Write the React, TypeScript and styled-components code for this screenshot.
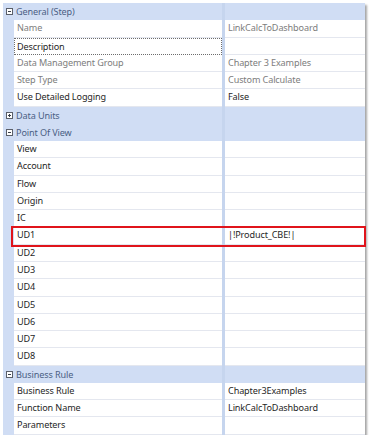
import React from "react";
import styled, { createGlobalStyle } from "styled-components";

const Global = createGlobalStyle`
  html, body { margin: 0; padding: 0; background: #ffffff; }
  body { font-family: "Noto Sans", "Open Sans", sans-serif; }
`;

const ROW_H = 17.28;

const Panel = styled.div`
  position: relative;
  margin: 3px 0 0 3px;
  width: 362px;
  background: #ffffff;
  box-shadow: 2px 2px 2px rgba(0, 0, 0, 0.35);
`;

const Row = styled.div<{ $header?: boolean }>`
  display: grid;
  grid-template-columns: 11px 208px 3px 140px;
  height: ${ROW_H}px;
  background: ${(p) => (p.$header ? "#d0ddf4" : "#ffffff")};
  font-size: 9.1px;
  letter-spacing: -0.12px;
  line-height: ${ROW_H}px;
`;

const Gutter = styled.div`
  background: #d0ddf4;
  display: flex;
  align-items: center;
  justify-content: center;
`;

const Toggle = styled.span<{ $open: boolean }>`
  position: relative;
  display: block;
  box-sizing: border-box;
  width: 7px;
  height: 7px;
  border: 1px solid #5a5f6a;
  background: #ffffff;
  margin-left: 2px;
  &::before {
    content: "";
    position: absolute;
    left: 1px;
    top: 2px;
    width: 3px;
    height: 1px;
    background: #3a3f4a;
  }
  &::after {
    content: "";
    position: absolute;
    left: 2px;
    top: 1px;
    width: 1px;
    height: 3px;
    background: #3a3f4a;
    display: ${(p) => (p.$open ? "none" : "block")};
  }
`;

const HeaderLabel = styled.div`
  color: #4b5f84;
  padding-left: 2px;
  white-space: nowrap;
`;

const Label = styled.div<{ $muted?: boolean; $focused?: boolean }>`
  box-sizing: border-box;
  color: ${(p) => (p.$muted ? "#7d7d7d" : "#1f1f1f")};
  white-space: nowrap;
  border: ${(p) => (p.$focused ? "1px dotted #6d6d6d" : "none")};
  border-bottom: ${(p) => (p.$focused ? "1px dotted #6d6d6d" : "1px solid #e4e7ef")};
  padding-left: ${(p) => (p.$focused ? "2px" : "3px")};
  line-height: ${(p) => (p.$focused ? ROW_H - 2 : ROW_H - 1)}px;
`;

const Divider = styled.div`
  background: #c6d5ee;
`;

const Value = styled.div<{ $muted?: boolean }>`
  box-sizing: border-box;
  color: ${(p) => (p.$muted ? "#7d7d7d" : "#1f1f1f")};
  padding-left: 3px;
  white-space: nowrap;
  overflow: hidden;
  border-bottom: 1px solid #e4e7ef;
  line-height: ${ROW_H - 1}px;
`;

const HeaderFill = styled.div``;

const Highlight = styled.div<{ $index: number }>`
  position: absolute;
  left: 8px;
  right: -1px;
  top: ${(p) => p.$index * ROW_H - 1.5}px;
  height: ${ROW_H + 3.5}px;
  box-sizing: border-box;
  border: 2px solid #e0141b;
  pointer-events: none;
`;

type Item =
  | { kind: "header"; label: string; open: boolean }
  | { kind: "prop"; label: string; value?: string; labelMuted?: boolean; valueMuted?: boolean; focused?: boolean };

const items: Item[] = [
  { kind: "header", label: "General (Step)", open: true },
  { kind: "prop", label: "Name", value: "LinkCalcToDashboard", labelMuted: true, valueMuted: true },
  { kind: "prop", label: "Description", focused: true },
  { kind: "prop", label: "Data Management Group", value: "Chapter 3 Examples", labelMuted: true, valueMuted: true },
  { kind: "prop", label: "Step Type", value: "Custom Calculate", labelMuted: true, valueMuted: true },
  { kind: "prop", label: "Use Detailed Logging", value: "False" },
  { kind: "header", label: "Data Units", open: false },
  { kind: "header", label: "Point Of View", open: true },
  { kind: "prop", label: "View" },
  { kind: "prop", label: "Account" },
  { kind: "prop", label: "Flow" },
  { kind: "prop", label: "Origin" },
  { kind: "prop", label: "IC" },
  { kind: "prop", label: "UD1", value: "|!Product_CBE!|" },
  { kind: "prop", label: "UD2" },
  { kind: "prop", label: "UD3" },
  { kind: "prop", label: "UD4" },
  { kind: "prop", label: "UD5" },
  { kind: "prop", label: "UD6" },
  { kind: "prop", label: "UD7" },
  { kind: "prop", label: "UD8" },
  { kind: "header", label: "Business Rule", open: true },
  { kind: "prop", label: "Business Rule", value: "Chapter3Examples" },
  { kind: "prop", label: "Function Name", value: "LinkCalcToDashboard" },
  { kind: "prop", label: "Parameters" },
];

export default function App() {
  const highlighted = items.findIndex((i) => i.kind === "prop" && i.label === "UD1");
  return (
    <>
      <Global />
      <Panel>
        {items.map((it, i) =>
          it.kind === "header" ? (
            <Row key={i} $header>
              <Gutter>
                <Toggle $open={it.open} />
              </Gutter>
              <HeaderLabel>{it.label}</HeaderLabel>
              <Divider />
              <HeaderFill />
            </Row>
          ) : (
            <Row key={i}>
              <Gutter />
              <Label $muted={it.labelMuted} $focused={it.focused}>
                {it.label}
              </Label>
              <Divider />
              <Value $muted={it.valueMuted}>{it.value ?? ""}</Value>
            </Row>
          )
        )}
        <Highlight $index={highlighted} />
      </Panel>
    </>
  );
}
